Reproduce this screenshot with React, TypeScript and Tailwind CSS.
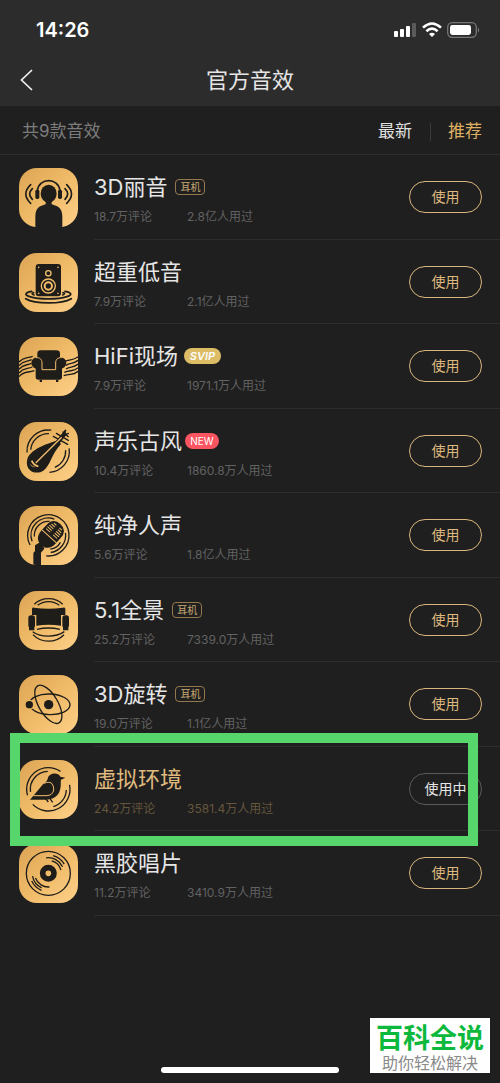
import React, { useState } from 'react';

const DARK = '#1f1d1a';
const GOLD = '#f2be6c';

type BadgeKind = 'earphone' | 'svip' | 'new';

interface Effect {
    name: string;
    comments: string;
    users: string;
    badge?: BadgeKind;
    icon: () => React.ReactElement;
}

// Part of a circle, angles in degrees, clockwise from three o'clock
function Arc({ r, from, to, cx = 88, cy = 88 }: { r: number; from: number; to: number; cx?: number; cy?: number }) {
    const point = (deg: number) => {
        const rad = (deg * Math.PI) / 180;
        return `${cx + r * Math.cos(rad)} ${cy + r * Math.sin(rad)}`;
    };
    const large = to - from > 180 ? 1 : 0;
    return <path d={`M${point(from)} A${r} ${r} 0 ${large} 1 ${point(to)}`} />;
}

function HeadphoneIcon() {
    return (
        <>
            <path d="M49 177V146C49 120 62 114 80 109V98H98V109C116 114 130 120 130 146V177Z" fill="#1f1f1f" />
            <ellipse cx="89" cy="77" rx="24" ry="27" fill={DARK} />
            <rect x="49" y="65" width="12" height="28" rx="5" fill={DARK} />
            <rect x="117" y="65" width="12" height="28" rx="5" fill={DARK} />
            <g fill="none" stroke={DARK} strokeWidth="5" strokeLinecap="round">
                <path d="M55 68C60 28 118 28 123 68" />
                <path d="M35 50Q6 78 35 106M40 62Q24 78 40 94" />
                <path d="M143 50Q172 78 143 106M138 62Q154 78 138 94" />
            </g>
        </>
    );
}

function SpeakerIcon() {
    return (
        <>
            <rect x="50" y="33" width="76" height="97" rx="9" fill={DARK} />
            <g fill={GOLD}>
                <circle cx="59" cy="43" r="2.5" />
                <circle cx="117" cy="43" r="2.5" />
                <circle cx="59" cy="121" r="2.5" />
                <circle cx="117" cy="121" r="2.5" />
            </g>
            <g fill="none" stroke={GOLD}>
                <circle cx="88" cy="61" r="8" strokeWidth="4" />
                <circle cx="88" cy="99" r="21" strokeWidth="4" />
                <circle cx="88" cy="99" r="11" strokeWidth="6" />
            </g>
            <g fill="none" stroke={DARK} strokeWidth="5" strokeLinecap="round">
                <path d="M38 115C16 119 16 126 32 131C60 140 116 140 144 131C160 126 160 119 138 115" />
                <path d="M44 119Q34 122 45 126M132 119Q142 122 131 126" />
                <path d="M20 137C48 154 128 154 157 137" />
            </g>
        </>
    );
}

function ArmchairIcon() {
    return (
        <>
            <g fill="none" stroke={DARK} strokeWidth="4">
                <path d="M0 75C14 59 24 65 41 58M0 86C14 69 24 75 38 68M0 97C14 80 24 86 37 79M0 108C14 91 24 97 40 90M0 119C14 102 26 108 46 101" />
                <path d="M177 59C163 72 152 65 135 74M177 70C163 83 154 76 141 85M177 81C163 94 154 87 141 96M177 92C163 105 154 98 136 106M177 103C163 116 154 109 134 116" />
            </g>
            <path d="M55 64V50Q55 40 66 40H112Q123 40 123 50V64Z" fill={DARK} />
            <circle cx="54" cy="78" r="17" fill={DARK} />
            <circle cx="125" cy="78" r="17" fill={DARK} />
            <path d="M50 74H129V120Q129 128 121 128H58Q50 128 50 120Z" fill={DARK} />
            <path d="M60 55H118V90H60Z" fill={DARK} />
            <path d="M62 128H69V135H62ZM111 128H118V135H111Z" fill={DARK} />
            <path d="M50 62C63 61 69 67 69 78V98H110V78C110 67 116 61 129 62" fill="none" stroke={GOLD} strokeWidth="3" />
        </>
    );
}

function PipaIcon() {
    return (
        <>
            <g fill="none" stroke={DARK} strokeWidth="4">
                <Arc r={64} from={177} to={278} />
                <Arc r={53} from={185} to={272} />
                <Arc r={63} from={-8} to={87} />
                <Arc r={52} from={-4} to={68} />
            </g>
            <path d="M116 55C84 66 30 82 24 116C19 148 52 160 73 146C94 132 98 94 126 66Z" fill={DARK} />
            <g fill="none" stroke={DARK} strokeLinecap="round">
                <path d="M115 62L136 36" strokeWidth="13" />
                <path d="M134 34L139 26" strokeWidth="6" />
                <path d="M103 43L146 67M112 34L148 55M132 30L148 44M128 44L148 34" strokeWidth="4" />
            </g>
            <g fill="none" stroke={GOLD}>
                <path d="M50 123L128 46" strokeWidth="4" />
                <path d="M38 116Q44 131 58 133" strokeWidth="5" />
                <path d="M34 128Q40 134 47 135" strokeWidth="2" />
            </g>
        </>
    );
}

function MicIcon() {
    return (
        <>
            <g fill="none" stroke={DARK} strokeWidth="4">
                <Arc r={62} from={152} to={456} />
                <Arc r={52} from={160} to={290} />
                <Arc r={52} from={-8} to={82} />
                <Arc r={42} from={175} to={275} />
                <Arc r={42} from={30} to={82} />
            </g>
            <g transform="translate(96 85) rotate(-48)">
                <path d="M-42 -12Q-34 -29 -12 -29H10Q42 -29 42 0Q42 29 10 29H-12Q-34 29 -42 12Z" fill={DARK} />
                <g stroke={GOLD} strokeWidth="3" fill="none">
                    <path d="M-8 -29V29" />
                    <path d="M3 -22V-6M10 -23V-6M17 -22V-6M24 -20V-6M31 -16V-6" />
                    <path d="M3 6V22M10 6V23M17 6V22M24 6V20M31 6V16" />
                </g>
            </g>
            <path d="M48 118L68 106L76 128L62 145H48Z" fill={DARK} />
            <path d="M43 177V143Q43 136 50 136H60Q66 136 66 143V177Z" fill="#1f1f1f" />
        </>
    );
}

function SofaIcon() {
    return (
        <>
            <path d="M39 54Q39 49 45 50Q88 56 132 50Q139 49 139 54V72H126V104Q88 98 52 104V72H39Z" fill={DARK} />
            <rect x="28" y="73" width="20" height="38" rx="8" fill={DARK} />
            <rect x="130" y="73" width="20" height="38" rx="8" fill={DARK} />
            <path d="M30 108H46V118H30ZM132 108H148V118H132Z" fill={DARK} />
            <g fill="none" stroke={DARK} strokeWidth="4">
                <path d="M46 40C68 17 109 17 131 40" />
                <path d="M56 43C74 28 103 28 121 43" />
                <path d="M54 115Q88 107 123 115" />
                <path d="M41 122C66 140 110 140 136 122" />
                <path d="M42 131C66 157 110 157 135 131" />
            </g>
        </>
    );
}

function AtomIcon() {
    return (
        <>
            <g fill="none" stroke={DARK} strokeWidth="4">
                <ellipse cx="92" cy="88" rx="61" ry="31" transform="rotate(2 92 88)" />
                <ellipse cx="88" cy="88" rx="64" ry="29" transform="rotate(60 88 88)" />
            </g>
            <circle cx="31" cy="89" r="15" fill="#e9b45e" />
            <circle cx="31" cy="89" r="11" fill={DARK} />
            <circle cx="89" cy="89" r="14" fill={DARK} />
        </>
    );
}

function BirdIcon() {
    return (
        <>
            <g fill="none" stroke={DARK} strokeWidth="4">
                <Arc r={65} from={164} to={304} />
                <Arc r={54} from={172} to={268} />
                <Arc r={65} from={-12} to={136} />
                <Arc r={54} from={2} to={74} />
            </g>
            <path
                d="M33 119L72 73C82 65 84 63 86 56C90 38 118 36 124 50L139 53L126 59C124 67 128 82 120 98C110 115 94 119 72 119Z"
                fill={DARK}
            />
            <path d="M43 107H84C105 106 110 84 97 69C92 66 84 66 76 70" fill="none" stroke={GOLD} strokeWidth="3" />
            <path d="M81 117L88 126M93 116L101 127" stroke={DARK} strokeWidth="4" />
        </>
    );
}

function VinylIcon() {
    return (
        <>
            <circle cx="88" cy="88" r="66" fill="none" stroke={DARK} strokeWidth="4" />
            <circle cx="88" cy="88" r="17" fill="none" stroke={DARK} strokeWidth="17" />
            <g fill="none" stroke={DARK} strokeWidth="4">
                <Arc r={55} from={-75} to={-30} />
                <Arc r={47} from={-98} to={-25} />
                <Arc r={39} from={-75} to={-15} />
                <Arc r={55} from={112} to={155} />
                <Arc r={48} from={115} to={170} />
                <Arc r={41} from={85} to={160} />
            </g>
        </>
    );
}

const effects: Effect[] = [
    { name: '3D丽音', comments: '18.7万评论', users: '2.8亿人用过', badge: 'earphone', icon: HeadphoneIcon },
    { name: '超重低音', comments: '7.9万评论', users: '2.1亿人用过', icon: SpeakerIcon },
    { name: 'HiFi现场', comments: '7.9万评论', users: '1971.1万人用过', badge: 'svip', icon: ArmchairIcon },
    { name: '声乐古风', comments: '10.4万评论', users: '1860.8万人用过', badge: 'new', icon: PipaIcon },
    { name: '纯净人声', comments: '5.6万评论', users: '1.8亿人用过', icon: MicIcon },
    { name: '5.1全景', comments: '25.2万评论', users: '7339.0万人用过', badge: 'earphone', icon: SofaIcon },
    { name: '3D旋转', comments: '19.0万评论', users: '1.1亿人用过', badge: 'earphone', icon: AtomIcon },
    { name: '虚拟环境', comments: '24.2万评论', users: '3581.4万人用过', icon: BirdIcon },
    { name: '黑胶唱片', comments: '11.2万评论', users: '3410.9万人用过', icon: VinylIcon },
];

function Badge({ kind }: { kind: BadgeKind }) {
    if (kind === 'svip') {
        return (
            <span className="ml-[6px] flex h-4 w-[37px] items-center justify-center rounded-full bg-[#dcbc64] text-[11px] font-semibold italic text-white">
                SVIP
            </span>
        );
    }
    if (kind === 'new') {
        return (
            <span className="ml-[3px] flex h-4 w-[34px] items-center justify-center rounded-full bg-[#fa5560] text-[10px] text-white">
                NEW
            </span>
        );
    }
    return (
        <span className="ml-2 flex h-4 w-[30px] items-center justify-center rounded border border-[#94794f] text-[10px] text-[#c9a973]">
            耳机
        </span>
    );
}

function EffectRow({ effect, active, onUse }: { effect: Effect; active: boolean; onUse: () => void }) {
    const Icon = effect.icon;
    return (
        <li className="relative flex pl-[19px] odd:h-[85px] even:h-[84px]">
            <svg
                viewBox="0 0 177 177"
                className="mt-[13px] h-[59px] w-[59px] shrink-0 rounded-[18px] bg-linear-to-br from-[#dba455] via-[#f0bb68] to-[#fdd089]"
                aria-hidden="true"
            >
                <Icon />
            </svg>
            <div className="ml-4 flex flex-1 items-start border-b border-[#2d2d2d] pr-[18px]">
                <div className="flex-1 pt-[17px]">
                    <h2
                        className={`flex items-center text-[22px] leading-[30px] ${active ? 'text-[#dfb97e]' : 'text-[#e6e6e6]'}`}
                    >
                        {effect.name}
                        {effect.badge && <Badge kind={effect.badge} />}
                    </h2>
                    <p
                        className={`mt-[7px] flex text-xs leading-4 ${active ? 'text-[#66563c]' : 'text-[#626262]'}`}
                    >
                        <span className="w-[93px]">{effect.comments}</span>
                        <span>{effect.users}</span>
                    </p>
                </div>
                <button
                    onClick={onUse}
                    className={`mt-[26px] h-8 w-[73px] rounded-full border text-sm ${active ? 'border-[#5a5a5a] text-[#e6e6e6]' : 'border-[#d9b67c] text-[#dfb97e]'}`}
                >
                    {active ? '使用中' : '使用'}
                </button>
            </div>
            {active && (
                <div className="pointer-events-none absolute -top-[14px] right-[22px] -bottom-[15px] left-[10px] z-10 border-10 border-[#57d66c]" />
            )}
        </li>
    );
}

function StatusBar() {
    return (
        <div className="flex h-[60px] items-center justify-between pr-[20px] pl-[36px]">
            <span className="text-[20px] font-semibold">14:26</span>
            <svg viewBox="0 0 86 16" className="h-4 w-[86px]" fill="#fff" aria-hidden="true">
                <rect x="0" y="9" width="4" height="6" rx="1" />
                <rect x="6" y="7" width="4" height="8" rx="1" />
                <rect x="12" y="4" width="4" height="11" rx="1" />
                <rect x="18" y="1" width="4" height="14" rx="1" fill="#5b5b5b" />
                <g fill="none" stroke="#fff" strokeWidth="2.6">
                    <path d="M29 5.6Q38 -2.6 47 5.6" />
                    <path d="M32.4 9.2Q38 4.2 43.6 9.2" />
                </g>
                <path d="M35 12Q38 9.6 41 12L38 15Z" />
                <rect x="53.7" y="0.7" width="28.6" height="14.6" rx="4.5" fill="none" stroke="#777" strokeWidth="1.3" />
                <rect x="56" y="3" width="21" height="10" rx="2.4" />
                <path d="M84 5.5Q86 8 84 10.5Z" fill="#888" />
            </svg>
        </div>
    );
}

export default function App() {
    const [current, setCurrent] = useState('虚拟环境');
    const [sort, setSort] = useState('推荐');

    return (
        <div className="relative flex min-h-screen flex-col bg-[#1f1f1f] font-[Inter,'Noto_Sans_CJK_SC',sans-serif] text-white">
            <header className="bg-[#2c2c2c] pb-[6px]">
                <StatusBar />
                <div className="grid h-10 grid-cols-[1fr_auto_1fr] items-center px-5">
                    <button aria-label="返回" className="w-4">
                        <svg viewBox="0 0 16 22" className="h-[22px] w-4" fill="none" stroke="#f0f0f0" strokeWidth="1.7">
                            <path d="M12 1L1.5 11L12 21" />
                        </svg>
                    </button>
                    <h1 className="text-[22px] leading-[30px] text-[#e6e6e6]">官方音效</h1>
                </div>
            </header>

            <div className="flex h-[49px] items-center border-b border-[#2d2d2d] pt-[3px] pr-[18px] pl-[22px] text-[17px]">
                <span className="flex-1 text-[#7c7c7c]">共9款音效</span>
                <button onClick={() => setSort('最新')} className={sort === '最新' ? 'text-[#dfb064]' : 'text-[#e0e0e0]'}>
                    最新
                </button>
                <span className="mr-[17px] ml-[18px] h-[18px] w-px bg-[#3a3a3a]" />
                <button onClick={() => setSort('推荐')} className={sort === '推荐' ? 'text-[#dfb064]' : 'text-[#e0e0e0]'}>
                    推荐
                </button>
            </div>

            <ul>
                {effects.map((effect) => (
                    <EffectRow
                        key={effect.name}
                        effect={effect}
                        active={effect.name === current}
                        onUse={() => setCurrent(effect.name)}
                    />
                ))}
            </ul>

            {/* Home indicator */}
            <div className="mt-auto flex justify-center pb-[10px]">
                <div className="h-[6px] w-[178px] rounded-full bg-white" />
            </div>

            <div className="absolute right-[10px] bottom-[10px] flex h-[55px] w-[120px] flex-col items-center bg-white pt-[5px]">
                <strong className="text-[27px] leading-[31px] font-bold text-[#0cb93c]">百科全说</strong>
                <span className="text-base leading-[18px] text-[#8a8a8a]">助你轻松解决</span>
            </div>
        </div>
    );
}
